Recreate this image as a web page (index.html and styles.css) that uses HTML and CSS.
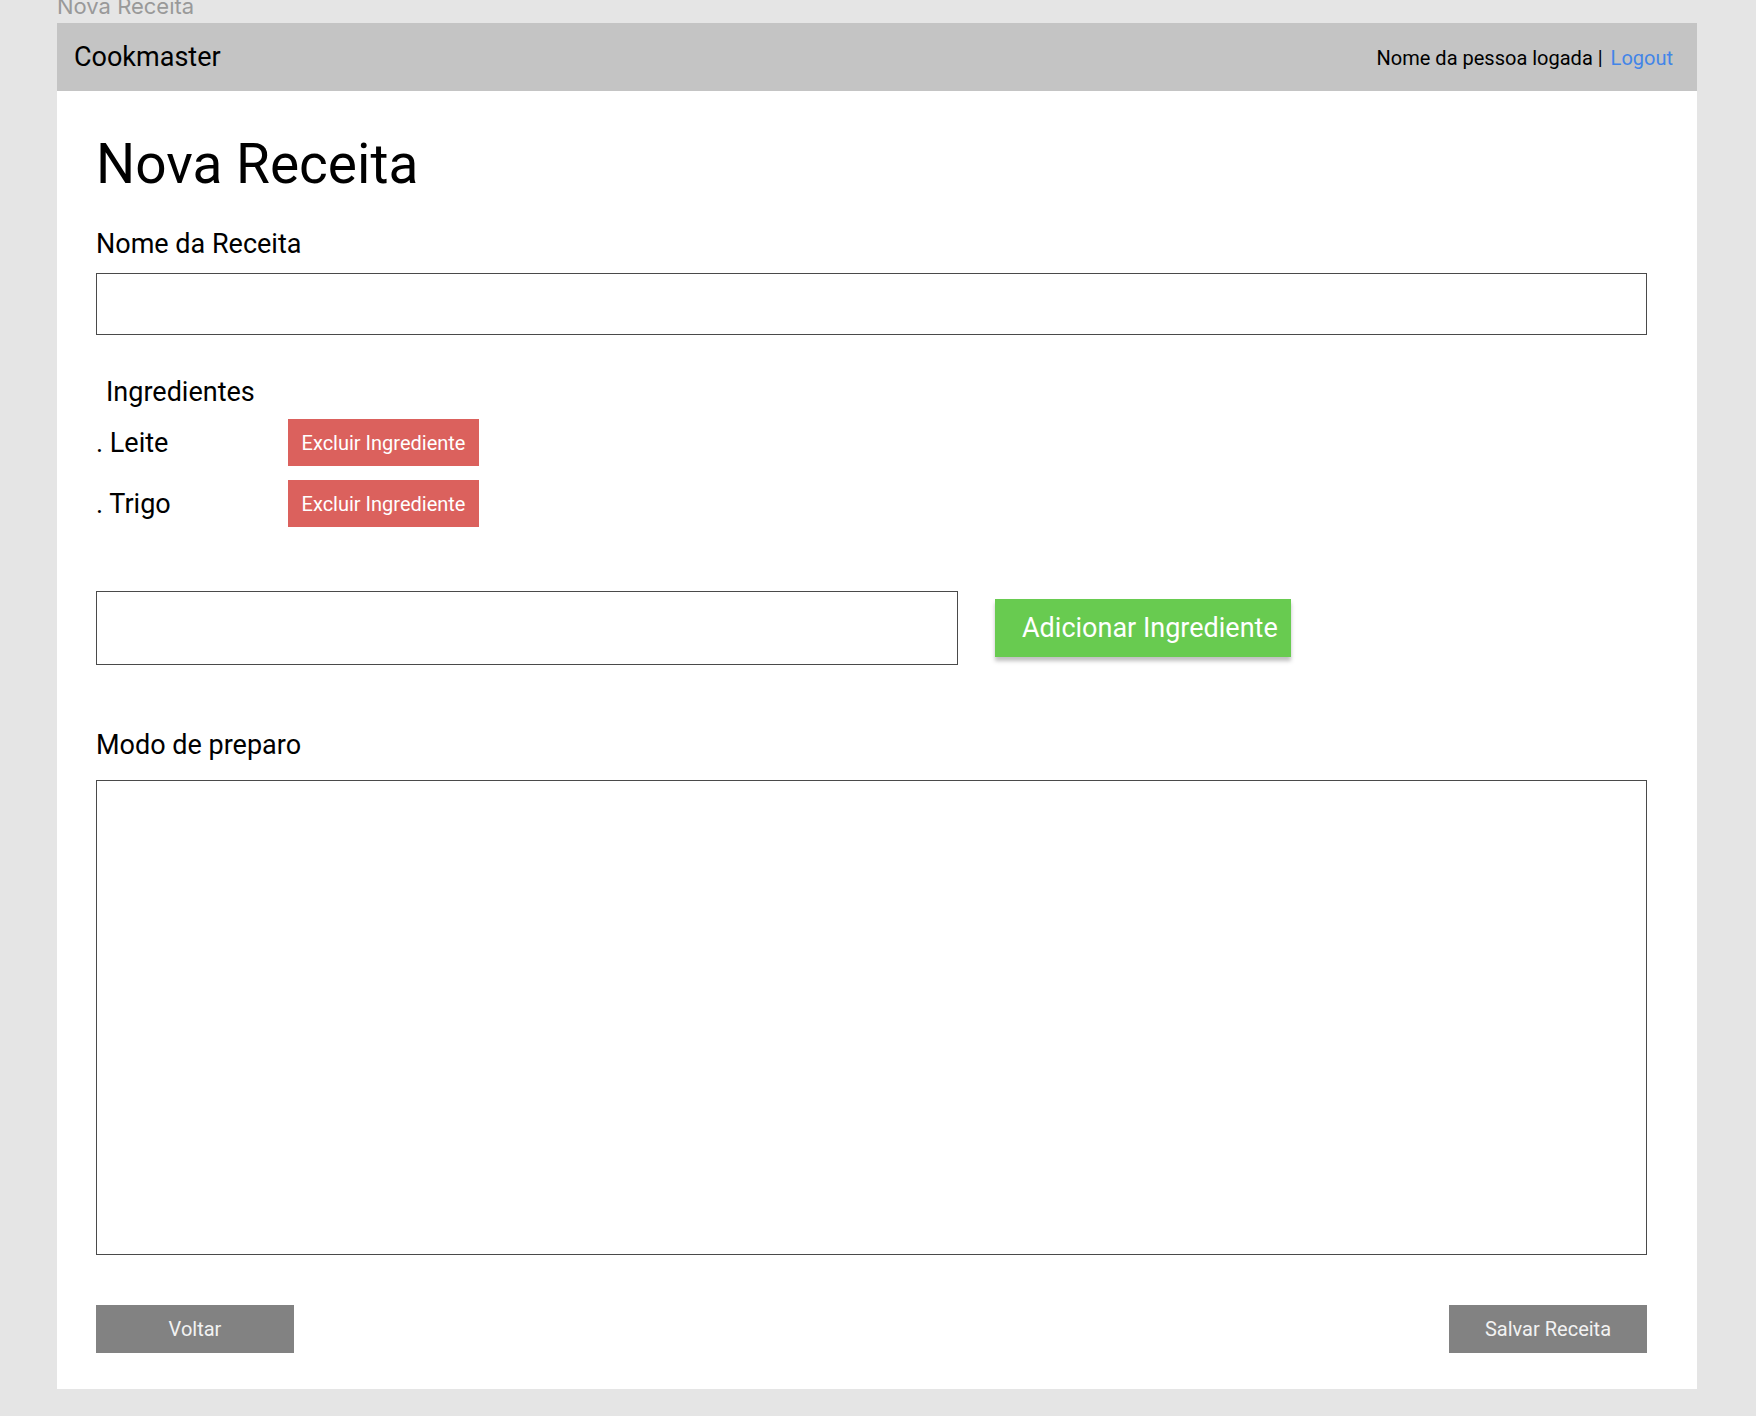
FILE: index.html
```html
<!DOCTYPE html>
<html lang="pt-BR">
<head>
  <meta charset="utf-8">
  <meta name="viewport" content="width=device-width, initial-scale=1">
  <title>Nova Receita</title>
  <link rel="stylesheet" href="styles.css">
</head>
<body>
  <p class="frame-name">Nova Receita</p>
  <div class="frame">
    <header class="topbar">
      <span class="brand">Cookmaster</span>
      <div class="session">
        <span>Nome da pessoa logada |</span>
        <a class="logout" href="#">Logout</a>
      </div>
    </header>
    <main class="content">
      <h1 class="title">Nova Receita</h1>
      <form class="form">
        <label class="label" for="name">Nome da Receita</label>
        <input class="field field-name" id="name" type="text">

        <label class="label label-ingredients" for="ingredient">Ingredientes</label>
        <ul class="ingredients">
          <li class="ingredient">
            <span class="ingredient-name">. Leite</span>
            <button class="button button-remove" type="button">Excluir Ingrediente</button>
          </li>
          <li class="ingredient">
            <span class="ingredient-name">. Trigo</span>
            <button class="button button-remove" type="button">Excluir Ingrediente</button>
          </li>
        </ul>
        <div class="add-row">
          <input class="field field-ingredient" id="ingredient" type="text">
          <button class="button button-add" type="button">Adicionar Ingrediente</button>
        </div>

        <label class="label" for="steps">Modo de preparo</label>
        <textarea class="field field-steps" id="steps"></textarea>

        <div class="actions">
          <button class="button button-action" type="button">Voltar</button>
          <button class="button button-action" type="submit">Salvar Receita</button>
        </div>
      </form>
    </main>
  </div>
</body>
</html>
```

FILE: styles.css
```css
* {
  box-sizing: border-box;
}

body {
  margin: 0;
  padding: 0 59px 27px 57px;
  background: #e5e5e5;
  color: #000;
  font-family: Roboto, "Liberation Sans", sans-serif;
  font-size: 27px;
  line-height: 34px;
}

.frame-name {
  margin: 0;
  padding-bottom: 11px;
  color: #999;
  font-family: Inter, sans-serif;
  font-size: 22px;
  line-height: 12px;
}

.frame {
  background: #fff;
}

.topbar {
  display: flex;
  align-items: center;
  justify-content: space-between;
  min-height: 68px;
  padding: 0 24px 0 17px;
  background: #c4c4c4;
}

.session {
  display: flex;
  gap: 8px;
  padding-top: 2px;
  font-size: 20px;
}

.logout {
  color: #4285e8;
  text-decoration: none;
}

.content {
  padding: 41px 50px 36px 39px;
}

.title {
  margin: 0 0 31px;
  font-size: 55px;
  font-weight: 400;
  line-height: 64px;
}

.form {
  display: flex;
  flex-direction: column;
}

.field {
  width: 100%;
  margin: 0;
  padding: 8px 16px;
  border: 1px solid #4a4a4a;
  border-radius: 0;
  background: #fff;
  color: inherit;
  font: inherit;
}

.field-name {
  height: 62px;
  margin: 12px 0 40px;
}

.label-ingredients {
  padding-left: 10px;
}

.ingredients {
  display: grid;
  gap: 14px;
  margin: 10px 0 64px;
  padding: 0;
  list-style: none;
}

.ingredient {
  display: grid;
  grid-template-columns: 192px auto;
  align-items: center;
  justify-content: start;
}

.button {
  padding: 0;
  border: 0;
  border-radius: 0;
  color: #fff;
  font-family: inherit;
  font-size: 20px;
  cursor: pointer;
}

.button-remove {
  width: 191px;
  height: 47px;
  background: #db615d;
}

.add-row {
  display: flex;
  align-items: center;
  gap: 37px;
  margin-bottom: 63px;
}

.field-ingredient {
  width: 56%;
  max-width: 862px;
  height: 74px;
}

.button-add {
  height: 58px;
  padding: 0 13px 0 27px;
  background: #68cb50;
  box-shadow: 0 4px 4px rgba(0, 0, 0, 0.25);
  font-size: 27px;
}

.field-steps {
  height: 475px;
  margin: 18px 0 50px;
  resize: none;
}

.actions {
  display: flex;
  justify-content: space-between;
}

.button-action {
  width: 198px;
  height: 48px;
  background: #828282;
  color: #f2f2f2;
}
```
